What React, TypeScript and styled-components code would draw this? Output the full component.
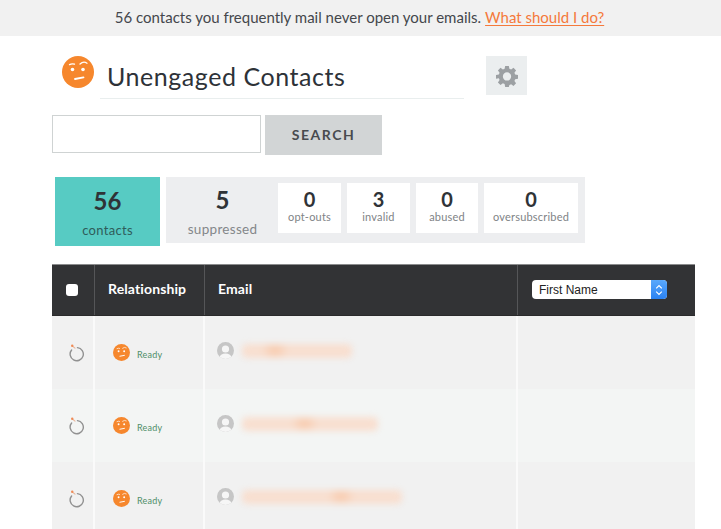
import React from "react";
import styled, { createGlobalStyle } from "styled-components";

const Global = createGlobalStyle`
  html, body { margin: 0; padding: 0; background: #fff; height: 529px; overflow: hidden; }
  body { font-family: Lato, "Open Sans", "Liberation Sans", sans-serif; color: #33363a; }
  * { box-sizing: border-box; }
`;

const Page = styled.div`
  width: 721px;
  height: 529px;
  overflow: hidden;
`;
const Banner = styled.div`
  height: 36px;
  background: #f1f1f1;
  display: flex;
  align-items: center;
  justify-content: center;
  gap: 4px;
  font-size: 15px;
  color: #44474c;
  padding-bottom: 3px;
  padding-right: 2px;
`;
const BannerLink = styled.a`
  color: #f5793b;
  text-decoration: underline;
  text-underline-offset: 2px;
`;
const Content = styled.div`
  padding: 20px 26px 0 52px;
`;
const HeaderRow = styled.div`
  display: flex;
  align-items: flex-start;
  padding-left: 10px;
  height: 59px;
`;
const TitleBox = styled.div`
  width: 364px;
  height: 43px;
  margin-left: 6px;
  padding: 3px 0 0 7px;
  border-bottom: 1px solid #e9eeee;
  font-size: 25px;
  line-height: 34px;
  letter-spacing: 0.55px;
  color: #2e3238;
`;
const GearButton = styled.div`
  width: 41px;
  height: 39px;
  margin-left: 22px;
  background: #ebeeef;
  display: flex;
  align-items: center;
  justify-content: center;
  padding-left: 1px;
`;
const SearchRow = styled.div`
  display: flex;
  align-items: flex-start;
  gap: 4px;
`;
const SearchInput = styled.input`
  width: 209px;
  height: 38px;
  border: 1px solid #cfd3d3;
  background: #fff;
  outline: none;
`;
const SearchButton = styled.button`
  width: 117px;
  height: 40px;
  border: 0;
  background: #d2d5d6;
  font-family: inherit;
  font-weight: 700;
  font-size: 14px;
  letter-spacing: 1.5px;
  color: #484b4f;
  padding: 0 0 2px;
`;
const Stats = styled.div`
  display: flex;
  align-items: flex-start;
  margin: 22px 0 0 3px;
  gap: 6px;
  height: 87px;
`;
const TealCard = styled.div`
  width: 105px;
  height: 69px;
  background: #57cbc3;
  display: flex;
  flex-direction: column;
  align-items: center;
  padding-top: 9px;
`;
const TealNumber = styled.div`
  font-size: 24px;
  line-height: 30px;
  font-weight: 700;
  color: #2f3337;
`;
const TealLabel = styled.div`
  font-size: 13px;
  line-height: 16px;
  margin-top: 6px;
  letter-spacing: 0.3px;
  color: #2f5c5a;
`;
const GreyPanel = styled.div`
  width: 419px;
  height: 66px;
  background: #edeef0;
  display: flex;
  align-items: flex-start;
  padding: 6px 7px 0 0;
  gap: 6px;
`;
const SuppressedCell = styled.div`
  width: 106px;
  display: flex;
  flex-direction: column;
  align-items: center;
  padding: 2px 0 0 7px;
`;
const SuppressedNumber = styled.div`
  font-size: 24px;
  line-height: 30px;
  font-weight: 700;
  color: #2f3337;
`;
const SuppressedLabel = styled.div`
  font-size: 13.5px;
  line-height: 16px;
  margin-top: 6px;
  letter-spacing: 0.3px;
  color: #84878a;
`;
const SubCard = styled.div<{ $w: number }>`
  width: ${(p) => p.$w}px;
  height: 50px;
  background: #fff;
  display: flex;
  flex-direction: column;
  align-items: center;
  padding-top: 5px;
`;
const SubNumber = styled.div`
  font-size: 20px;
  line-height: 22px;
  font-weight: 700;
  color: #2f3337;
`;
const SubLabel = styled.div`
  font-size: 11px;
  line-height: 13px;
  letter-spacing: 0.2px;
  color: #808386;
`;
const Table = styled.div`
  width: 643px;
`;
const columns = "43px 110px 313px 1fr";
const HeadRow = styled.div`
  display: grid;
  grid-template-columns: ${columns};
  height: 52px;
  background: #323335;
  border-top: 1px solid #8b8c8d;
  border-bottom: 1px solid #2a2a2b;
`;
const HeadCell = styled.div`
  display: flex;
  align-items: center;
  padding-left: 13px;
  padding-bottom: 3px;
  border-right: 1px solid #555658;
  font-size: 14px;
  font-weight: 700;
  letter-spacing: 0.12px;
  color: #fff;
  &:last-child { border-right: 0; padding-left: 14px; padding-top: 1px; padding-bottom: 2px; }
`;
const CheckCell = styled(HeadCell)`
  justify-content: center;
  padding: 0 0 1px;
`;
const Check = styled.span`
  width: 12px;
  height: 12px;
  margin-right: 2px;
  background: #fff;
  border-radius: 3px;
`;
const SelectBox = styled.div`
  width: 135px;
  height: 19px;
  background: #fff;
  border-radius: 4px;
  display: flex;
  align-items: center;
  justify-content: space-between;
  overflow: hidden;
  font-family: "Liberation Sans", Arial, sans-serif;
  font-weight: 400;
  font-size: 12px;
  letter-spacing: 0;
  color: #222;
  padding-left: 7px;
`;
const SelectArrow = styled.span`
  width: 16px;
  height: 100%;
  background: linear-gradient(#5aa8fb, #2a82f2);
  display: flex;
  align-items: center;
  justify-content: center;
`;
const Row = styled.div<{ $alt?: boolean }>`
  display: grid;
  grid-template-columns: ${columns};
  height: 73px;
  background: ${(p) => (p.$alt ? "#f3f5f4" : "#f1f1f1")};
`;
const Cell = styled.div`
  display: flex;
  align-items: flex-start;
  border-right: 2px solid #fafafa;
  &:last-child { border-right: 0; }
`;
const UndoCell = styled(Cell)`
  padding: 28px 0 0 17px;
`;
const RelCell = styled(Cell)`
  padding: 28px 0 0 18px;
  gap: 7px;
`;
const Ready = styled.span`
  font-size: 9px;
  line-height: 10px;
  margin-top: 6px;
  letter-spacing: 0.2px;
  color: #4f8f68;
`;
const EmailCell = styled(Cell)`
  padding: 26px 0 0 12px;
  gap: 6px;
`;
const Blur = styled.div<{ $w: number; $spot: number }>`
  width: ${(p) => p.$w}px;
  height: 14px;
  margin-top: 2px;
  margin-left: 2px;
  background: radial-gradient(ellipse 14px 10px at ${(p) => p.$spot}% 45%, #f8c9ab 0%, rgba(248, 201, 171, 0) 100%), #f8dfd0;
  border-radius: 5px;
  filter: blur(3px);
`;

const Face = ({ size }: { size: number }) => (
  <svg width={size} height={size} viewBox="0 0 32 32" style={{ flex: "none" }}>
    <circle cx="16" cy="16" r="16" fill="#f6872d" />
    <circle cx="10.5" cy="13.5" r="1.8" fill="#fff" />
    <circle cx="21" cy="13.5" r="1.8" fill="#fff" />
    <path d="M7.5 8.6 Q10 7.2 12.5 8.2" stroke="#fff" strokeWidth="1.3" fill="none" strokeLinecap="round" />
    <path d="M18 8 Q21.5 4.8 25 7.2" stroke="#fff" strokeWidth="1.3" fill="none" strokeLinecap="round" />
    <path d="M13 23 L21.5 21.4" stroke="#fff" strokeWidth="1.8" fill="none" strokeLinecap="round" />
  </svg>
);

const Gear = () => (
  <svg width="22" height="22" viewBox="0 0 24 24" fill="#9ca0a3">
    <path
      fillRule="evenodd"
      d="M10 1h4l.6 3.1 1.9.8L19.1 3.1l2.8 2.8-1.8 2.6.8 1.9L24 11v4l-3.1.5-.8 1.9 1.8 2.6-2.8 2.8-2.6-1.8-1.9.8L14 24h-4l-.6-3.2-1.9-.8-2.6 1.8L2.1 19l1.8-2.6-.8-1.9L0 15v-4l3.1-.6.8-1.9L2.1 5.9l2.8-2.8 2.6 1.8 1.9-.8L10 1Zm2 7a4.5 4.5 0 1 0 0 9 4.5 4.5 0 0 0 0-9Z"
    />
  </svg>
);

const Undo = () => (
  <svg width="16" height="18" viewBox="0 0 16 18" fill="none" style={{ flex: "none" }}>
    <path d="M2.6 6A6.6 6.6 0 1 0 8.5 3.6" stroke="#919191" strokeWidth="1.4" strokeLinecap="round" />
    <path d="M3.4 2 L6 4.2" stroke="#e9b79c" strokeWidth="1.1" strokeLinecap="round" />
    <circle cx="3.2" cy="1.8" r="1.2" fill="#ef8a55" />
  </svg>
);

const Avatar = () => (
  <svg width="17" height="17" viewBox="0 0 17 17" style={{ flex: "none" }}>
    <defs>
      <clipPath id="avatar-clip"><circle cx="8.5" cy="8.5" r="8.5" /></clipPath>
    </defs>
    <g clipPath="url(#avatar-clip)">
      <rect width="17" height="17" fill="#c6c6c6" />
      <circle cx="8.5" cy="7" r="3.6" fill="#f6f6f6" />
      <ellipse cx="8.5" cy="15.5" rx="6" ry="4" fill="#f6f6f6" />
    </g>
  </svg>
);

const rows = [
  { w: 110, spot: 30, alt: false },
  { w: 136, spot: 46, alt: true },
  { w: 160, spot: 62, alt: false },
];
const subs = [
  { n: "0", l: "opt-outs", w: 63 },
  { n: "3", l: "invalid", w: 63 },
  { n: "0", l: "abused", w: 62 },
  { n: "0", l: "oversubscribed", w: 94 },
];

export default function App() {
  return (
    <Page>
      <Global />
      <Banner>
        <span>56 contacts you frequently mail never open your emails.</span>
        <BannerLink href="#">What should I do?</BannerLink>
      </Banner>
      <Content>
        <HeaderRow>
          <Face size={32} />
          <TitleBox>Unengaged Contacts</TitleBox>
          <GearButton><Gear /></GearButton>
        </HeaderRow>
        <SearchRow>
          <SearchInput />
          <SearchButton>SEARCH</SearchButton>
        </SearchRow>
        <Stats>
          <TealCard>
            <TealNumber>56</TealNumber>
            <TealLabel>contacts</TealLabel>
          </TealCard>
          <GreyPanel>
            <SuppressedCell>
              <SuppressedNumber>5</SuppressedNumber>
              <SuppressedLabel>suppressed</SuppressedLabel>
            </SuppressedCell>
            {subs.map((s) => (
              <SubCard key={s.l} $w={s.w}>
                <SubNumber>{s.n}</SubNumber>
                <SubLabel>{s.l}</SubLabel>
              </SubCard>
            ))}
          </GreyPanel>
        </Stats>
        <Table>
          <HeadRow>
            <CheckCell><Check /></CheckCell>
            <HeadCell>Relationship</HeadCell>
            <HeadCell>Email</HeadCell>
            <HeadCell>
              <SelectBox>
                First Name
                <SelectArrow>
                  <svg width="8" height="12" viewBox="0 0 8 12" fill="none">
                    <path d="M1.2 4.4 4 1.6l2.8 2.8M1.2 7.6 4 10.4l2.8-2.8" stroke="#fff" strokeWidth="1.2" />
                  </svg>
                </SelectArrow>
              </SelectBox>
            </HeadCell>
          </HeadRow>
          {rows.map((r, i) => (
            <Row key={i} $alt={r.alt}>
              <UndoCell><Undo /></UndoCell>
              <RelCell>
                <Face size={17} />
                <Ready>Ready</Ready>
              </RelCell>
              <EmailCell>
                <Avatar />
                <Blur $w={r.w} $spot={r.spot} />
              </EmailCell>
              <Cell />
            </Row>
          ))}
        </Table>
      </Content>
    </Page>
  );
}
